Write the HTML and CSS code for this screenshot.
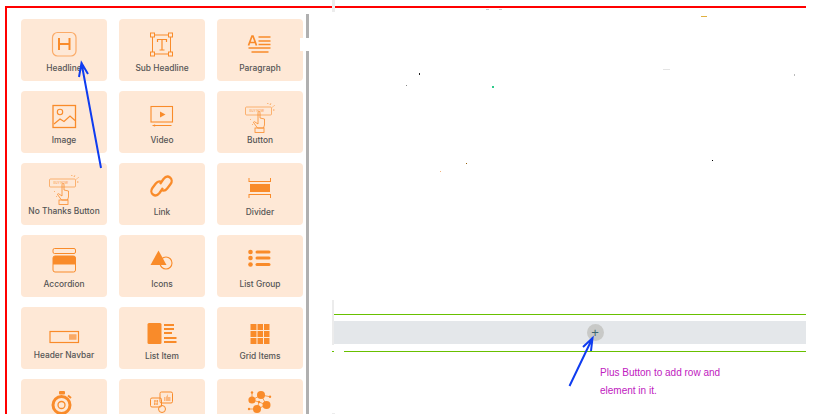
FILE: index.html
```html
<!DOCTYPE html>
<html lang="en">
<head>
    <meta charset="UTF-8">
    <title>Page Builder Elements</title>
    <link rel="stylesheet" href="styles.css">
</head>
<body>
    <div class="frame">
        <aside class="sidebar">
            <div class="grid">
                <div class="card">
                    <svg class="icon" viewBox="0 0 32 32"><rect x="4.500" y="4.500" width="23.500" height="23.500" rx="5" class="line-soft"/><path d="M11 10v12M21.500 10v12M11 16h10.500" class="line" stroke-width="2"/></svg>
                    <span>Headline</span>
                </div>
                <div class="card">
                    <svg class="icon" viewBox="0 0 32 32"><path d="M8 7h15M8 26h15M6.500 9v15M24.500 9v15" class="line"/><g class="line"><rect x="4.500" y="5" width="4" height="4"/><rect x="22.500" y="5" width="4" height="4"/><rect x="4.500" y="24" width="4" height="4"/><rect x="22.500" y="24" width="4" height="4"/></g><path d="M11.500 14v-2.500h9V14M16 11.500V22M13.500 22h5" class="line" stroke-width="1.200"/></svg>
                    <span>Sub Headline</span>
                </div>
                <div class="card">
                    <svg class="icon" viewBox="0 0 32 32"><path d="M4.500 17.500L8 8h1l3.500 9.500M6 14.500h5" class="line" stroke-width="1.700"/><path d="M14.500 9h12M14.500 13h12M14.500 16.500h12M4.500 20h22M7.500 24h17" class="line" stroke-width="1.300"/></svg>
                    <span>Paragraph</span>
                </div>
                <div class="card">
                    <svg class="icon" viewBox="0 0 32 32"><rect x="5" y="5.500" width="22.500" height="22" class="line" stroke-width="1.300"/><circle cx="12" cy="12" r="2.700" class="line" stroke-width="1.100"/><path d="M6 24l6-5 4 2.500 6-5.500 5 4.500" class="line" stroke-width="1.200"/></svg>
                    <span>Image</span>
                </div>
                <div class="card">
                    <svg class="icon" viewBox="0 0 32 32"><rect x="5" y="6.500" width="21.500" height="15.500" class="line" stroke-width="1.100"/><path d="M14 11.500l5.500 3-5.500 3z" class="solid"/><path d="M6.500 25.500h19" class="line"/><circle cx="8.500" cy="25.500" r="1" class="solid"/></svg>
                    <span>Video</span>
                </div>
                <div class="card">
                    <svg class="icon" viewBox="0 0 32 32"><use href="#buy-now"/></svg>
                    <span>Button</span>
                </div>
                <div class="card card-tight">
                    <svg class="icon" viewBox="0 0 32 32"><use href="#buy-now"/></svg>
                    <span>No Thanks Button</span>
                </div>
                <div class="card">
                    <svg class="icon" viewBox="0 0 32 32"><path d="M14 12l3.500-5c2-2.500 4.500-3 6.500-1.500s2.200 4.300.6 6.500l-3.400 4.500c-1.700 2.200-4 2.600-6 1.300" class="line" stroke-width="2.300"/><path d="M17 16l-3.500 5c-2 2.500-4.500 3-6.500 1.500s-2.200-4.300-.6-6.500l3.400-4.500c1.700-2.200 4-2.600 6-1.300" class="line" stroke-width="2.300"/></svg>
                    <span>Link</span>
                </div>
                <div class="card">
                    <svg class="icon" viewBox="0 0 32 32"><path d="M5 6v4M26.500 6v4M5 9.500h21.500M5 26v-4M26.500 26v-4M5 22.500h21.500" class="line"/><rect x="6" y="12" width="20" height="8" class="solid"/></svg>
                    <span>Divider</span>
                </div>
                <div class="card">
                    <svg class="icon" viewBox="0 0 32 32"><rect x="5" y="4.500" width="22.500" height="5" rx="1.500" class="line"/><rect x="5" y="12" width="22.500" height="16" rx="2" class="line"/><path d="M5 14a2 2 0 0 1 2-2h18.500a2 2 0 0 1 2 2v6.500H5z" class="solid"/></svg>
                    <span>Accordion</span>
                </div>
                <div class="card">
                    <svg class="icon" viewBox="0 0 32 32"><circle cx="20" cy="19" r="6" class="line" stroke-width="1.100"/><path d="M12.500 6.500l8 14.500h-16z" class="solid"/></svg>
                    <span>Icons</span>
                </div>
                <div class="card">
                    <svg class="icon" viewBox="0 0 32 32"><g class="solid"><circle cx="6.500" cy="8" r="2.300"/><circle cx="6.500" cy="14" r="2.300"/><circle cx="6.500" cy="20.500" r="2.300"/><rect x="11.500" y="6.500" width="15" height="3" rx="1.500"/><rect x="11.500" y="12.500" width="15" height="3" rx="1.500"/><rect x="11.500" y="19" width="15" height="3" rx="1.500"/></g></svg>
                    <span>List Group</span>
                </div>
                <div class="card card-tight">
                    <svg class="icon" viewBox="0 0 32 32"><rect x="2" y="15.500" width="28.500" height="11" class="line" stroke-width="1.200"/><rect x="21" y="18" width="7.500" height="6" class="solid-soft"/><path d="M21 20h7.500M21 22h7.500" class="line" stroke-width=".6"/></svg>
                    <span>Header Navbar</span>
                </div>
                <div class="card">
                    <svg class="icon" viewBox="0 0 32 32"><rect x="1.500" y="7" width="14" height="21" rx="1.500" class="solid"/><path d="M18 9h10M18 13h10M18 17h8M18 22h12.500M18 26h12.500" class="line" stroke-width="1.800"/></svg>
                    <span>List Item</span>
                </div>
                <div class="card">
                    <svg class="icon" viewBox="0 0 32 32"><g class="solid"><rect x="6.500" y="8" width="6" height="6"/><rect x="13.500" y="8" width="5.500" height="6"/><rect x="20" y="8" width="5.500" height="6"/><rect x="6.500" y="15" width="6" height="6"/><rect x="13.500" y="15" width="5.500" height="6"/><rect x="20" y="15" width="5.500" height="6"/><rect x="6.500" y="22" width="6" height="6"/><rect x="13.500" y="22" width="5.500" height="6"/><rect x="20" y="22" width="5.500" height="6"/></g></svg>
                    <span>Grid Items</span>
                </div>
                <div class="card">
                    <svg class="icon" viewBox="0 0 32 32"><rect x="11" y="3" width="6" height="3.500" rx="1" class="solid"/><circle cx="13.500" cy="17" r="8.500" class="line" stroke-width="3"/><circle cx="13.500" cy="17" r="3.500" class="line" stroke-width="1.300"/><path d="M20 7.500l3 2.500" class="line" stroke-width="2"/></svg>
                </div>
                <div class="card">
                    <svg class="icon" viewBox="0 0 32 32"><g class="line"><rect x="14" y="4" width="12.500" height="11" rx="1.500"/><rect x="4.500" y="10" width="11" height="9" rx="1.500"/><circle cx="16" cy="21" r="3.500"/></g><path d="M18 9h1.500v4H18zM20 9l2-3v3h2.500v4H20z" class="solid-soft"/><path d="M8 13h4M8 16h4M9 12l-.5 5M11.500 12l-.5 5" class="line" stroke-width=".7"/></svg>
                </div>
                <div class="card">
                    <svg class="icon" viewBox="0 0 32 32"><path d="M8 4.500V12L17 7l5.500 10L13 21H5M17 7l9 1.700M8 12l7 2 7.500 3M13 21l2-7" class="line" stroke-width=".8"/><g class="solid"><circle cx="8" cy="12" r="3.600"/><circle cx="17" cy="7" r="4"/><circle cx="22.500" cy="17" r="4"/><circle cx="13" cy="21" r="4"/><circle cx="8" cy="4.500" r="1.200"/><circle cx="26" cy="8.700" r="1.200"/><circle cx="5" cy="21" r="1.200"/><circle cx="15" cy="14" r="1.200"/></g></svg>
                </div>
            </div>
            <div class="scrollbar"></div>
            <div class="scroll-notch"></div>
        </aside>

        <main class="canvas">
            <div class="row-slot">
                <div class="green-line"></div>
                <div class="row-band">
                    <button class="add-row">+</button>
                </div>
                <div class="green-line green-line-broken"></div>
            </div>
            <p class="note">Plus Button to add row and<br>element in it.</p>
        </main>
    </div>

    <!-- markup laid on top of the screenshot -->
    <svg class="overlay" viewBox="0 0 815 418">
        <defs>
            <g id="buy-now" class="line" stroke-width=".6">
                <rect x="1.500" y="7" width="26" height="8" rx="1"/>
                <text x="5.500" y="12.300" class="buy-text">BUY NOW</text>
                <path d="M14 24v-11c0-2 2-2 2 0v5l4.500 1v6l-1 3h-6l-4-5.500c0-1 1-1 1.500-.5z" stroke-width=".8"/>
                <rect x="11" y="28" width="9" height="4.500" stroke-width=".8"/>
                <path d="M26 5l1-2M28.500 7l2-1.500M29 10h2M24 4l-.5-1.500M6 19l1 1M8 24l1 1" stroke-dasharray="1 .6" stroke-width=".8"/>
            </g>
        </defs>
        <g class="edge-shadow">
            <rect x="332" y="0" width="3" height="12"/>
            <rect x="332" y="300" width="2" height="45"/>
            <rect x="332" y="413" width="3" height="1"/>
        </g>
        <g fill="none" stroke="#0f3cf0" stroke-width="2">
            <path d="M101 168L81.500 63M79 77L81.500 63L88 74"/>
            <path d="M569.500 386L592.500 338M583 347L592.500 338L591 351"/>
        </g>
        <g>
            <rect x="419" y="73" width="1" height="2" fill="#222"/>
            <rect x="406" y="85" width="1" height="1" fill="#888"/>
            <rect x="492" y="86" width="2" height="2" fill="#2ecb8a"/>
            <rect x="466" y="163" width="1" height="1" fill="#96610a"/>
            <rect x="440" y="171" width="1" height="1" fill="#f5b47a"/>
            <rect x="712" y="160" width="1" height="1" fill="#000"/>
            <rect x="701" y="16" width="6" height="1" fill="#e0b040"/>
            <rect x="663" y="69" width="7" height="1" fill="#e4e4e4"/>
            <rect x="794" y="74" width="1" height="2" fill="#bbb"/>
            <rect x="486" y="9" width="3" height="1" fill="#c8ccd0"/>
            <rect x="499" y="9" width="3" height="1" fill="#c8ccd0"/>
        </g>
    </svg>
</body>
</html>
```

FILE: styles.css
```css
html, body {
    margin: 0;
    height: 100%;
    overflow: hidden;
    background: #fff;
}
.frame {
    display: flex;
    box-sizing: border-box;
    width: 801px;
    height: 408px;
    margin: 6px 0 0 5px;
    border-top: 2px solid #f00;
    border-left: 2px solid #f00;
    overflow: hidden;
}
.sidebar {
    position: relative;
    flex: none;
    width: 325px;
    padding: 11px 0 0 14px;
    box-sizing: border-box;
}
.grid {
    display: grid;
    grid-template-columns: repeat(3, 86px);
    grid-auto-rows: 62px;
    column-gap: 12px;
    row-gap: 10px;
}
.card {
    display: flex;
    flex-direction: column;
    align-items: center;
    padding-top: 9px;
    box-sizing: border-box;
    background: #fee8d6;
    border-radius: 4px;
}
.card span {
    margin-top: 2px;
    font-family: "Inter", sans-serif;
    font-size: 8.400px;
    font-weight: 500;
    line-height: 12px;
    color: #555;
    white-space: nowrap;
}
.card-tight span {
    margin-top: 1px;
}
.icon {
    display: block;
    flex: none;
    width: 32px;
    height: 32px;
    overflow: visible;
}
.line {
    fill: none;
    stroke: #f98b2a;
}
.line-soft {
    fill: none;
    stroke: #fbab68;
    stroke-width: 1.200;
}
.solid {
    fill: #f98b2a;
}
.solid-soft {
    fill: #fbb77f;
}
.buy-text {
    fill: #fbab68;
    stroke: none;
    font-family: "Inter", sans-serif;
    font-size: 3px;
    font-weight: 600;
}
.scrollbar {
    position: absolute;
    top: 6px;
    bottom: 0;
    left: 299px;
    width: 3px;
    background: #b0b0b0;
}
.scroll-notch {
    position: absolute;
    top: 30px;
    left: 293px;
    width: 10px;
    height: 13px;
    background: #fff;
}
.canvas {
    flex: 1;
    min-width: 0;
}
.row-slot {
    margin-top: 306px;
}
.green-line {
    height: 1px;
    background: #68c000;
}
.green-line-broken {
    background: linear-gradient(to right, #68c000 2px, transparent 2px, transparent 12px, #68c000 12px);
}
.row-band {
    display: flex;
    justify-content: center;
    align-items: center;
    height: 23px;
    margin: 6px 0 7px;
    padding-left: 52px;
    background: #e4e7ea;
}
.add-row {
    width: 17px;
    height: 17px;
    padding: 0;
    border: none;
    border-radius: 50%;
    background: #c8c9c7;
    color: #3c6670;
    font-family: "Liberation Sans", sans-serif;
    font-size: 13px;
    line-height: 15px;
}
.note {
    margin: 12px 0 0 268px;
    font-family: "Liberation Sans", sans-serif;
    font-size: 10px;
    line-height: 18px;
    color: #c020c0;
}
.edge-shadow {
    fill: #ececec;
}
.overlay {
    position: absolute;
    top: 0;
    left: 0;
    width: 815px;
    height: 418px;
    pointer-events: none;
}
```
